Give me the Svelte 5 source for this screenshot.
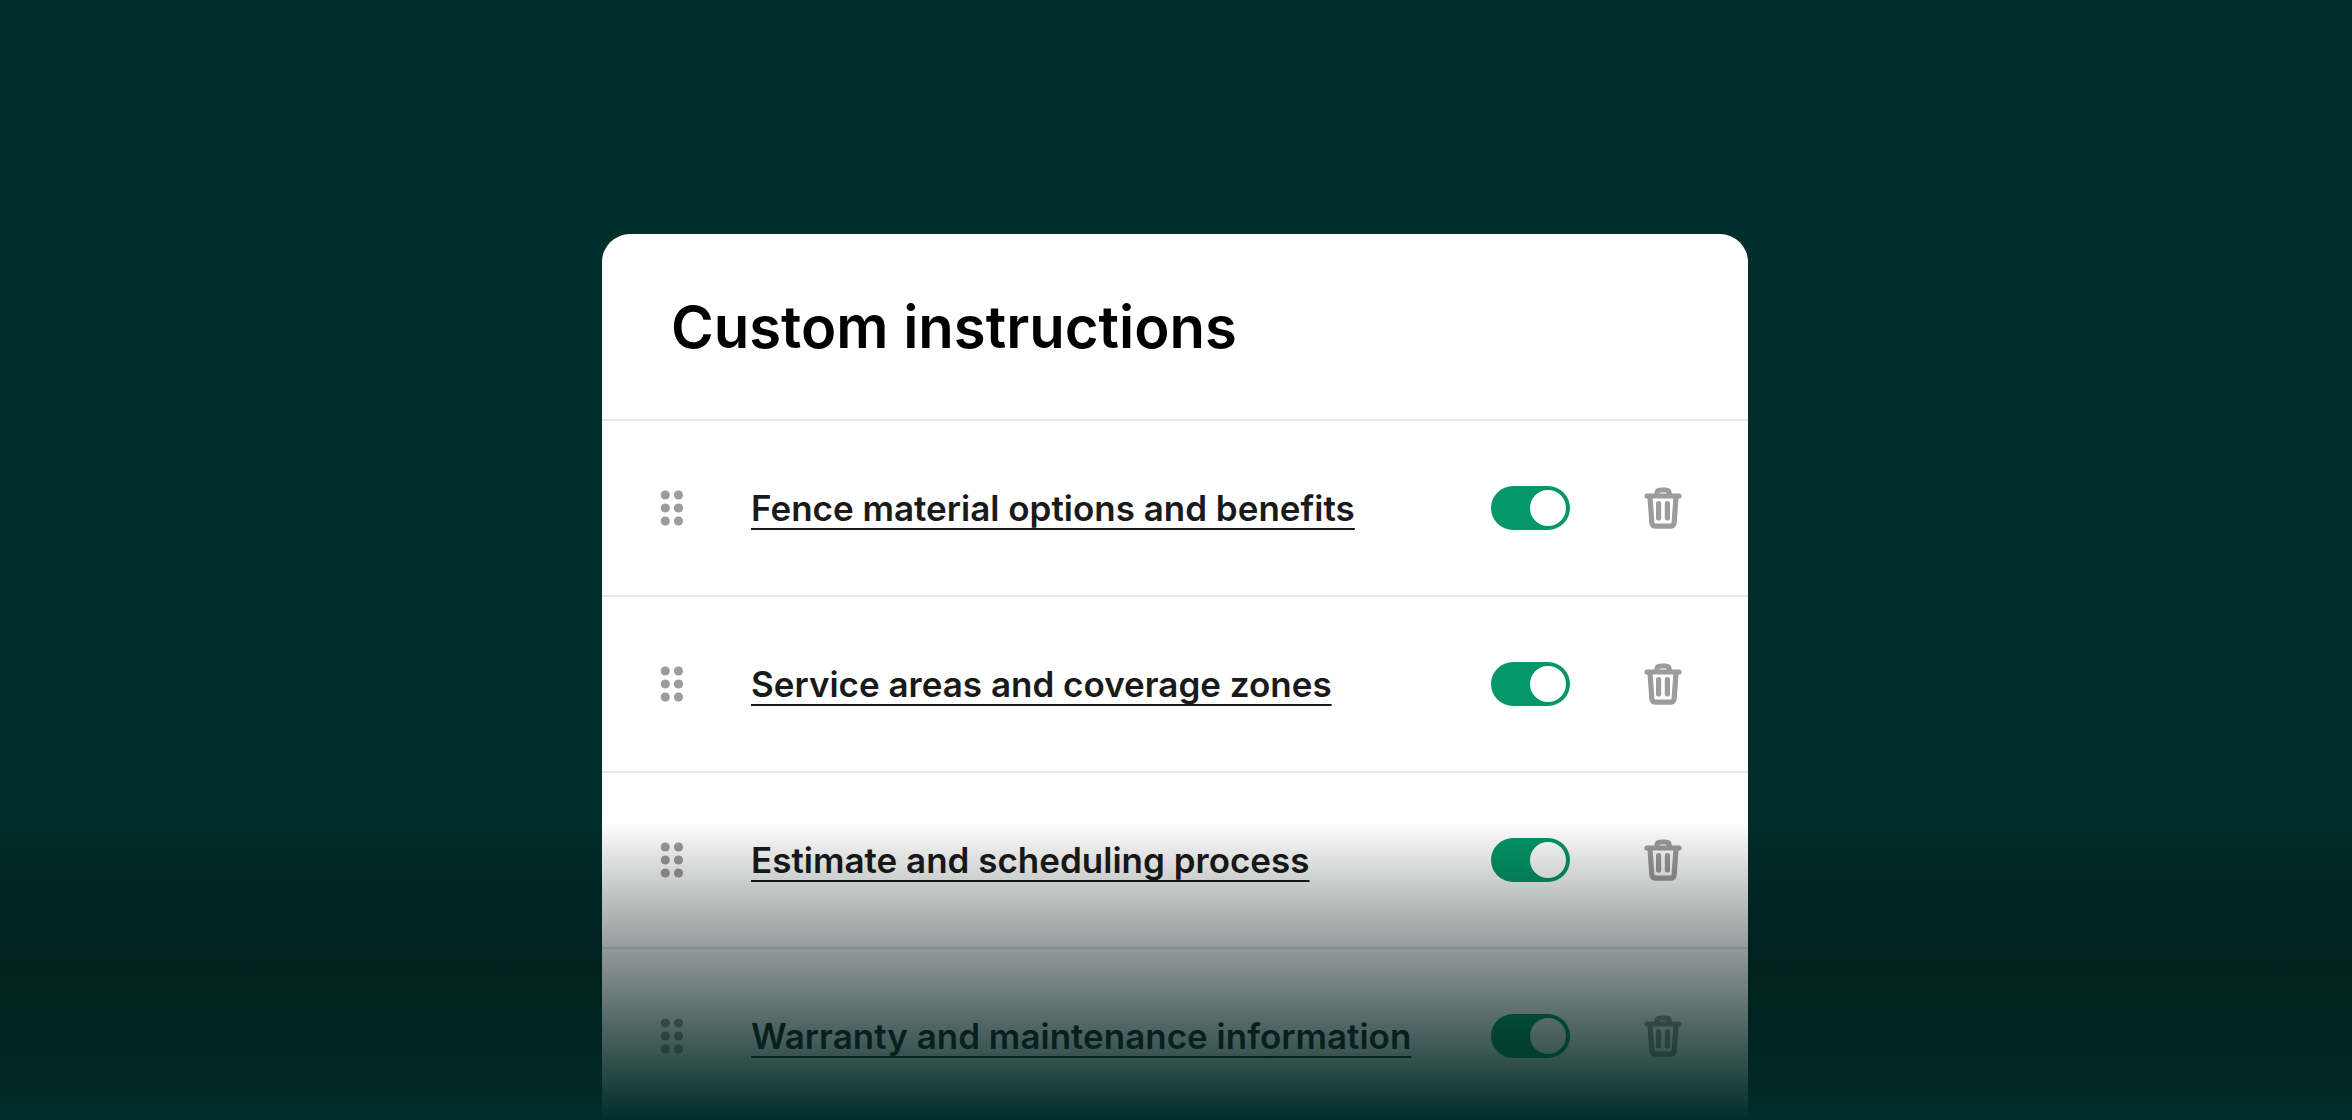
<script>
  let instructions = $state([
    { id: 'fence', title: 'Fence material options and benefits', enabled: true },
    { id: 'areas', title: 'Service areas and coverage zones', enabled: true },
    { id: 'estimate', title: 'Estimate and scheduling process', enabled: true },
    { id: 'warranty', title: 'Warranty and maintenance information', enabled: true }
  ]);

  /** @param {string} id */
  function remove(id) {
    instructions = instructions.filter((item) => item.id !== id);
  }
</script>

<main class="scene">
  <section class="card">
    <header class="card-header">
      <h1>Custom instructions</h1>
    </header>

    <ul class="list">
      {#each instructions as item (item.id)}
        <li class="row">
          <button class="icon-button" type="button" aria-label="Reorder {item.title}">
            <svg width="24" height="36" viewBox="0 0 24 36" fill="currentColor">
              {#each [5, 18, 31] as cy}
                <circle cx="5.3" {cy} r="4.6" />
                <circle cx="18.5" {cy} r="4.6" />
              {/each}
            </svg>
          </button>

          <div class="title">
            <a href="#{item.id}" id="title-{item.id}">{item.title}</a>
          </div>

          <input
            class="toggle"
            type="checkbox"
            role="switch"
            aria-labelledby="title-{item.id}"
            bind:checked={item.enabled}
          />

          <button
            class="icon-button"
            type="button"
            aria-label="Delete {item.title}"
            onclick={() => remove(item.id)}
          >
            <svg
              width="38"
              height="42"
              viewBox="0 0 38 42"
              fill="none"
              stroke="currentColor"
              stroke-width="5.2"
              stroke-linecap="round"
              stroke-linejoin="round"
            >
              <path d="M3 9H35" />
              <path d="M13 8.5V6.5Q13 3 17 3H21.5Q25.3 3 25.3 6.5V8.5" />
              <path d="M6 10L7.8 35.5Q8 39.2 12 39.2H26Q30 39.2 30.2 35.5L32 10" />
              <path d="M14.6 16.5V31M23.4 16.5V31" />
            </svg>
          </button>
        </li>
      {/each}
    </ul>
  </section>

  <div class="fade"></div>
</main>

<style>
  :global(body) {
    margin: 0;
  }

  .scene {
    position: relative;
    box-sizing: border-box;
    height: 100vh;
    padding: 234px 26px 0 24px;
    overflow: hidden;
    background: #002e2a;
    font-family: Inter, 'Liberation Sans', sans-serif;
  }

  .card {
    max-width: 1146px;
    margin: 0 auto;
    background: #fff;
    border-radius: 28px 28px 0 0;
  }

  .card-header {
    padding: 57px 69px 56px;
  }

  h1 {
    margin: 0;
    color: #000;
    font-size: 58px;
    font-weight: 600;
    line-height: 72px;
  }

  .list {
    margin: 0;
    padding: 0;
    list-style: none;
  }

  .row {
    display: flex;
    align-items: center;
    box-sizing: border-box;
    height: 176px;
    padding: 0 66px 0 58px;
    border-top: 2px solid #e6e8ea;
  }

  .icon-button {
    display: flex;
    padding: 0;
    border: 0;
    background: none;
    color: #9c9c9a;
    cursor: pointer;
  }

  .title {
    flex: 1;
    margin-left: 67px;
  }

  .title a {
    color: #1a1a1a;
    font-size: 35px;
    font-weight: 600;
    line-height: 44px;
    text-decoration: underline;
    text-decoration-skip-ink: none;
    text-decoration-thickness: 2px;
    text-underline-offset: 7px;
  }

  .toggle {
    appearance: none;
    display: flex;
    justify-content: flex-start;
    box-sizing: border-box;
    width: 79px;
    height: 44px;
    margin: 0 74px 0 0;
    padding: 4px;
    border-radius: 22px;
    background: #9c9c9a;
    cursor: pointer;
  }

  .toggle::before {
    content: '';
    width: 36px;
    height: 36px;
    border-radius: 50%;
    background: #fff;
  }

  .toggle:checked {
    justify-content: flex-end;
    background: #049768;
  }

  /* Stops darken towards black before they settle on the page colour */
  .fade {
    position: absolute;
    right: 0;
    bottom: 0;
    left: 0;
    height: 298px;
    background: linear-gradient(
      rgba(0, 0, 0, 0) 0%,
      rgba(0, 5, 4, 0.1) 10%,
      rgba(0, 9, 8, 0.2) 20%,
      rgba(0, 14, 13, 0.3) 30%,
      rgba(0, 18, 17, 0.4) 40%,
      rgba(0, 23, 21, 0.5) 50%,
      rgba(0, 28, 25, 0.6) 60%,
      rgba(0, 32, 29, 0.7) 70%,
      rgba(0, 37, 34, 0.8) 80%,
      rgba(0, 41, 38, 0.9) 90%,
      #002e2a 100%
    );
    pointer-events: none;
  }
</style>
